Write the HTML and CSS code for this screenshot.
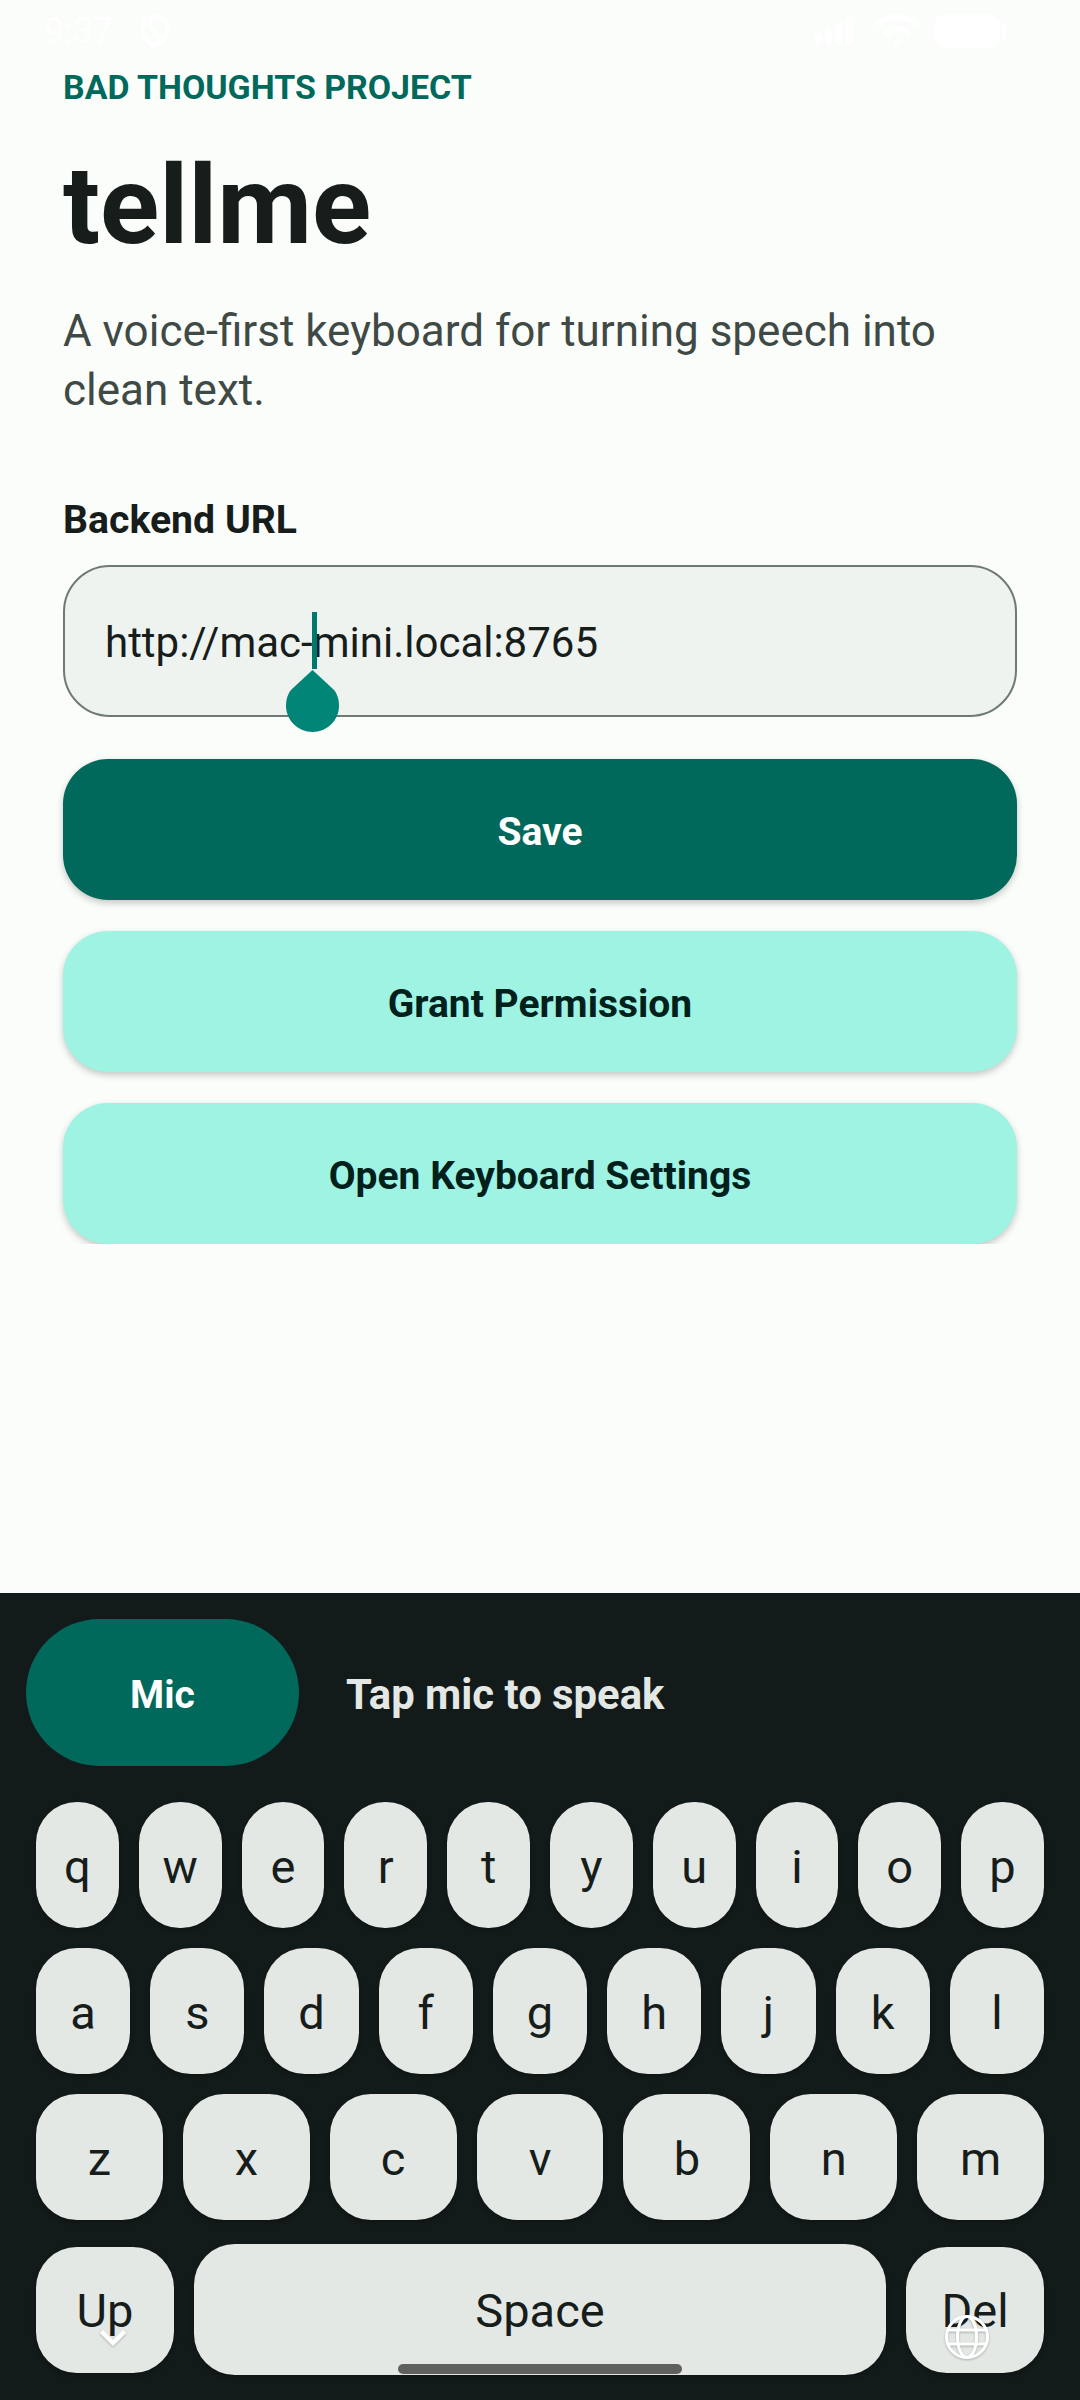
FILE: index.html
```html
<!DOCTYPE html>
<html lang="en">
<head>
<meta charset="UTF-8">
<meta name="viewport" content="width=device-width,initial-scale=1.0">
<title>tellme</title>
<link rel="stylesheet" href="styles.css">
</head>
<body>

<div class="screen">

  <!-- white on near-white, barely visible in the reference too -->
  <div class="status">
    <span class="clock">9:37</span>
    <svg class="status-shield" viewBox="0 0 30 34" fill="none" stroke="#fff" stroke-width="3.5" stroke-linecap="round">
      <path d="M15 2 L27 6 V17 C27 24 21 29 15 32 C9 29 3 24 3 17 V6 Z"/>
      <path d="M12 5 C8 12 11 15 15 18 C19 21 20 24 18 29"/>
    </svg>
    <div class="status-right">
      <svg class="status-signal" viewBox="0 0 44 32" fill="#fff">
        <rect x="0" y="18" width="8" height="14" rx="4"/>
        <rect x="12" y="12" width="8" height="20" rx="4"/>
        <rect x="24" y="6" width="8" height="26" rx="4"/>
        <rect x="36" y="0" width="8" height="32" rx="4"/>
      </svg>
      <svg class="status-wifi" viewBox="0 0 44 34" fill="none" stroke="#fff" stroke-width="6" stroke-linecap="round">
        <path d="M3 9 C14 1 30 1 41 9"/>
        <path d="M12 19 C18 14 26 14 32 19"/>
        <circle cx="22" cy="29" r="3.5" fill="#fff" stroke="none"/>
      </svg>
      <div class="battery"><span class="battery-nub"></span></div>
    </div>
  </div>

  <main class="main">
    <div class="eyebrow">BAD THOUGHTS PROJECT</div>
    <h1 class="title">tellme</h1>
    <p class="lead">A voice-first keyboard for turning speech into clean text.</p>

    <div class="field-label">Backend URL</div>
    <div class="field">
      <span class="field-text">http://mac-mini.local:8765</span>
      <span class="caret"></span>
      <svg class="caret-handle" viewBox="0 0 53 62">
        <path d="M26.5 0 L47 19 C51 23 53 29 53 36 C53 50 41 62 26.5 62 C12 62 0 50 0 36 C0 29 2 23 6 19 Z"/>
      </svg>
    </div>

    <button class="btn btn-primary">Save</button>
    <button class="btn btn-tonal">Grant Permission</button>
    <button class="btn btn-tonal">Open Keyboard Settings</button>
  </main>

  <section class="keyboard">
    <div class="kb-top">
      <button class="mic">Mic</button>
      <span class="kb-hint">Tap mic to speak</span>
    </div>

    <div class="kb-row">
      <div class="key">q</div><div class="key">w</div><div class="key">e</div><div class="key">r</div><div class="key">t</div>
      <div class="key">y</div><div class="key">u</div><div class="key">i</div><div class="key">o</div><div class="key">p</div>
    </div>
    <div class="kb-row">
      <div class="key">a</div><div class="key">s</div><div class="key">d</div><div class="key">f</div><div class="key">g</div>
      <div class="key">h</div><div class="key">j</div><div class="key">k</div><div class="key">l</div>
    </div>
    <div class="kb-row">
      <div class="key">z</div><div class="key">x</div><div class="key">c</div><div class="key">v</div>
      <div class="key">b</div><div class="key">n</div><div class="key">m</div>
    </div>
    <div class="kb-row kb-row-last">
      <div class="key key-side">Up</div>
      <div class="key key-space">Space</div>
      <div class="key key-side">Del</div>
    </div>

    <!-- system nav drawn over the keys -->
    <svg class="nav-chevron" viewBox="0 0 26 16" fill="none" stroke="#fff" stroke-width="4.5">
      <path d="M1.5 1.5 L13 13 L24.5 1.5"/>
    </svg>
    <div class="nav-pill"></div>
    <svg class="nav-globe" viewBox="0 0 44 44" fill="none" stroke="#fff" stroke-width="3">
      <circle cx="22" cy="22" r="20.5"/>
      <ellipse cx="22" cy="22" rx="9.5" ry="20.5"/>
      <path d="M3 15 H41 M3 29 H41"/>
    </svg>
  </section>

</div>

</body>
</html>
```

FILE: styles.css
```css
html,body{
  margin:0;
  padding:0;
  background:#FBFDFA;
  color:#171D1B;
  font-family:Roboto,"Liberation Sans",sans-serif;
}

.screen{
  width:1080px;
  height:2400px;
  display:flex;
  flex-direction:column;
  overflow:hidden;
}

/* ----------  STATUS BAR  ---------- */
.status{
  height:62px;
  padding:0 80px 0 44px;
  display:flex;
  align-items:center;
  color:#fff;
}
.clock{
  font-size:36px;
  line-height:62px;
}
.status-shield{
  width:30px;
  height:34px;
  margin-left:27px;
}
.status-right{
  margin-left:auto;
  display:flex;
  align-items:center;
}
.status-signal{
  width:40px;
  height:28px;
}
.status-wifi{
  width:45px;
  height:34px;
  margin-left:21px;
}
.battery{
  position:relative;
  width:65px;
  height:34px;
  margin-left:15px;
  background:#fff;
  border-radius:10px;
}
.battery-nub{
  position:absolute;
  left:67px;
  top:9px;
  width:4px;
  height:16px;
  background:#fff;
  border-radius:0 3px 3px 0;
}

/* ----------  MAIN CONTENT  ---------- */
.main{
  height:1182px;
  padding:0 63px;
  overflow:hidden;
  box-sizing:border-box;
  flex:none;
}
.eyebrow{
  font-size:33.9px;
  font-weight:700;
  line-height:40px;
  margin-top:6px;
  color:#00695C;
}
.title{
  margin:33px 0 0;
  font-size:109.5px;
  font-weight:700;
  line-height:130px;
  color:#171D1B;
}
.lead{
  margin:31px 0 0;
  font-size:44px;
  line-height:59px;
  color:#3F4946;
}
.field-label{
  margin-top:78px;
  font-size:39.2px;
  font-weight:700;
  line-height:44px;
}
.field{
  position:relative;
  height:152px;
  margin-top:23px;
  padding:3px 40px 0;
  display:flex;
  align-items:center;
  box-sizing:border-box;
  background:#EFF3F0;
  border:2px solid #6F7976;
  border-radius:47px;
}
.field-text{
  font-size:42px;
  color:#171D1B;
}
.caret{
  position:absolute;
  left:247px;
  top:45px;
  width:5px;
  height:57px;
  background:#00796B;
}
.caret-handle{
  position:absolute;
  left:221px;
  top:103px;
  width:53px;
  height:62px;
  fill:#008577;
}

.btn{
  display:block;
  width:100%;
  height:141px;
  padding:4px 0 0;
  border:0;
  border-radius:45px;
  font-family:inherit;
  font-size:39px;
  font-weight:700;
  box-shadow:0 3px 7px rgba(0,0,0,.22);
}
.btn-primary{
  margin-top:42px;
  background:#00695C;
  color:#fff;
}
.btn-tonal{
  margin-top:31px;
  background:#9FF3E3;
  color:#00201B;
}

/* ----------  KEYBOARD  ---------- */
.keyboard{
  position:relative;
  flex:1;
  padding:26px 36px 0;
  background:#131A1A;
  margin-top:349px;
}
.kb-top{
  display:flex;
  align-items:center;
  gap:47px;
  margin:0 0 36px -10px;
}
.mic{
  width:273px;
  height:147px;
  padding:5px 0 0;
  border:0;
  border-radius:74px;
  background:#00695C;
  color:#fff;
  font-family:inherit;
  font-size:39px;
  font-weight:700;
}
.kb-hint{
  padding-top:4px;
  font-size:41.8px;
  font-weight:700;
  color:#E3E8E4;
}
.kb-row{
  display:flex;
  align-items:center;
  gap:20px;
  margin-bottom:20px;
}
.kb-row-last{
  margin-top:24px;
}
.key{
  flex:1;
  height:126px;
  padding-top:2px;
  box-sizing:border-box;
  display:flex;
  align-items:center;
  justify-content:center;
  background:#E3E8E4;
  border-radius:41px;
  font-size:47px;
  color:#171D1B;
  box-shadow:0 2px 4px rgba(0,0,0,.25);
}
.key-side{
  flex:none;
  width:138px;
}
.key-space{
  height:131px;
}

.nav-chevron{
  position:absolute;
  left:100px;
  top:737px;
  width:26px;
  height:16px;
  filter:drop-shadow(0 1px 1px rgba(0,0,0,.25));
}
.nav-pill{
  position:absolute;
  left:398px;
  top:771px;
  width:284px;
  height:10px;
  background:#5F615F;
  border-radius:6px;
}
.nav-globe{
  position:absolute;
  left:945px;
  top:722px;
  width:44px;
  height:44px;
  filter:drop-shadow(0 1px 1px rgba(0,0,0,.25));
}
```
